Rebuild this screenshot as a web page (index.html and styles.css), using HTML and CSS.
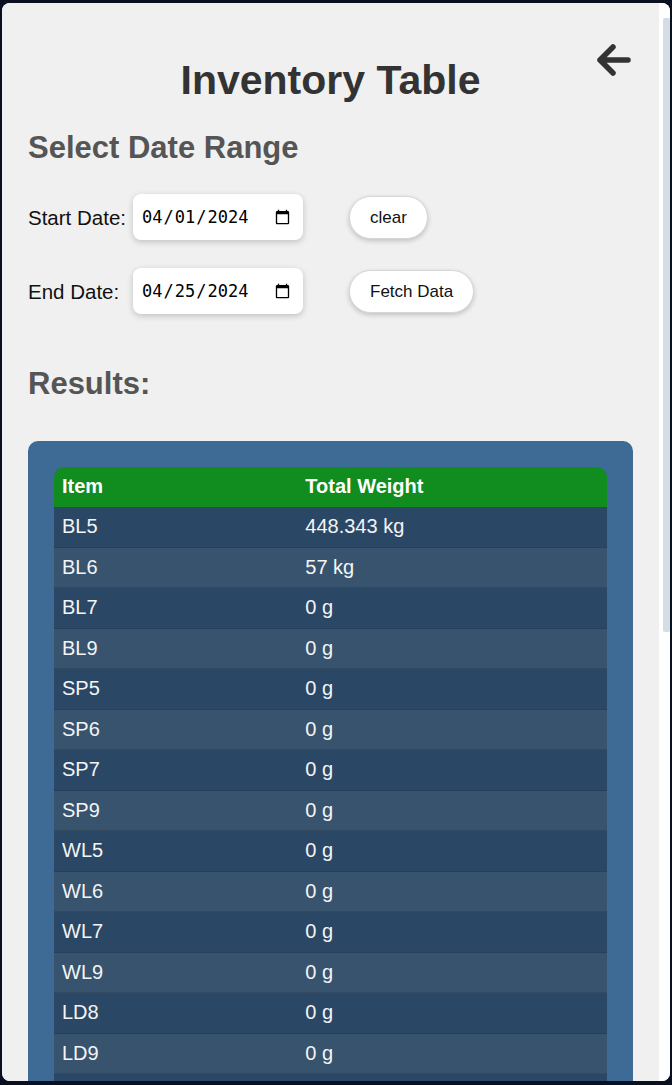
FILE: index.html
```html
<!DOCTYPE html>
<html lang="en">
<head>
<meta charset="utf-8">
<title>Inventory Table</title>
<link rel="stylesheet" href="styles.css">
</head>
<body>
<div class="card">
  <main class="content">
    <button class="back" aria-label="Back">
      <svg viewBox="0 0 36 36" width="36" height="36"><path d="M18 5 L5 18 L18 31 M5 18 H33" fill="none" stroke="#333" stroke-width="5.5" stroke-linecap="round" stroke-linejoin="round"/></svg>
    </button>
    <h1 class="title">Inventory Table</h1>
    <h2 class="section">Select Date Range</h2>
    <div class="range">
      <div class="row">
        <label class="label" for="start">Start Date:</label>
        <input class="date" id="start" type="date" value="2024-04-01">
        <button class="btn">clear</button>
      </div>
      <div class="row">
        <label class="label" for="end">End Date:</label>
        <input class="date" id="end" type="date" value="2024-04-25">
        <button class="btn">Fetch Data</button>
      </div>
    </div>
    <h2 class="section results">Results:</h2>
    <div class="table-wrap">
      <table class="inv">
        <thead>
          <tr><th class="col-item">Item</th><th>Total Weight</th></tr>
        </thead>
        <tbody>
          <tr><td>BL5</td><td>448.343 kg</td></tr>
          <tr><td>BL6</td><td>57 kg</td></tr>
          <tr><td>BL7</td><td>0 g</td></tr>
          <tr><td>BL9</td><td>0 g</td></tr>
          <tr><td>SP5</td><td>0 g</td></tr>
          <tr><td>SP6</td><td>0 g</td></tr>
          <tr><td>SP7</td><td>0 g</td></tr>
          <tr><td>SP9</td><td>0 g</td></tr>
          <tr><td>WL5</td><td>0 g</td></tr>
          <tr><td>WL6</td><td>0 g</td></tr>
          <tr><td>WL7</td><td>0 g</td></tr>
          <tr><td>WL9</td><td>0 g</td></tr>
          <tr><td>LD8</td><td>0 g</td></tr>
          <tr><td>LD9</td><td>0 g</td></tr>
          <tr><td>&nbsp;</td><td>&nbsp;</td></tr>
        </tbody>
      </table>
    </div>
  </main>
  <div class="scrollbar" aria-hidden="true">
    <div class="thumb"></div>
  </div>
</div>
</body>
</html>
```
FILE: styles.css
```css
html, body {
  margin: 0;
  padding: 0;
}
body {
  background: #0b1020;
  font-family: "Liberation Sans", Arial, sans-serif;
  padding: 3px 2px 4px 2px;
  height: 1085px;
  box-sizing: border-box;
  overflow: hidden;
}
.card {
  display: flex;
  height: 1078px;
  border-radius: 8px;
  overflow: hidden;
  background: #ffffff;
}
.content {
  position: relative;
  flex: 1;
  min-width: 0;
  background: #f0f0f0;
  overflow: hidden;
  padding: 1px 26px 40px 26px;
}
.scrollbar {
  width: 11px;
  flex: none;
  background: #ffffff;
  padding-top: 15px;
  box-sizing: border-box;
}
.thumb {
  margin-left: 4px;
  width: 7px;
  height: 614px;
  background: #d3dde6;
  border-radius: 2px;
}
.back {
  position: absolute;
  top: 39px;
  right: 28px;
  width: 36px;
  height: 36px;
  padding: 0;
  border: none;
  background: transparent;
  cursor: pointer;
}
.back svg {
  display: block;
}
.title {
  margin: 53px 0 0;
  font-size: 41px;
  line-height: 46px;
  font-weight: bold;
  color: #333;
  text-align: center;
}
.section {
  margin: 27px 0 0;
  font-size: 31px;
  line-height: 36px;
  font-weight: bold;
  color: #555;
}
.range {
  display: flex;
  flex-direction: column;
  gap: 28px;
  margin-top: 28px;
}
.row {
  display: flex;
  align-items: center;
}
.label {
  width: 105px;
  font-size: 20.5px;
  line-height: 23px;
  color: #111;
}
.date {
  box-sizing: border-box;
  width: 170px;
  height: 46px;
  border: none;
  border-radius: 8px;
  background: #fff;
  box-shadow: 0 2px 6px rgba(0, 0, 0, 0.2);
  padding: 0 10px 0 8px;
  font-family: "DejaVu Sans Mono", monospace;
  font-size: 17px;
  color: #000;
}
.btn {
  margin-left: 46px;
  padding: 11px 20px;
  border: 1px solid #d6d6d6;
  border-radius: 999px;
  background: #fff;
  box-shadow: 0 2px 5px rgba(0, 0, 0, 0.2);
  font-family: "Liberation Sans", Arial, sans-serif;
  font-size: 17px;
  line-height: 19px;
  color: #111;
}
.results {
  margin-top: 52px;
}
.table-wrap {
  margin-top: 39px;
  background: #3e6a96;
  border-radius: 10px;
  padding: 26px;
}
.inv {
  width: 100%;
  border-collapse: separate;
  border-spacing: 0;
  color: #f4f4f4;
  font-size: 20px;
}
.inv th, .inv td {
  text-align: left;
  padding: 8px;
  line-height: 23.5px;
  border-bottom: 1px solid rgba(0, 0, 0, 0.1);
}
.inv th {
  background: #118c1e;
  color: #fff;
  font-weight: bold;
  border-bottom: none;
  padding: 8px 8px 8.5px;
}
.inv th:first-child {
  border-top-left-radius: 10px;
}
.inv th:last-child {
  border-top-right-radius: 10px;
}
.col-item {
  width: 44%;
}
.inv tbody tr:nth-child(odd) td {
  background: #2b4766;
}
.inv tbody tr:nth-child(even) td {
  background: #37536e;
}
```
